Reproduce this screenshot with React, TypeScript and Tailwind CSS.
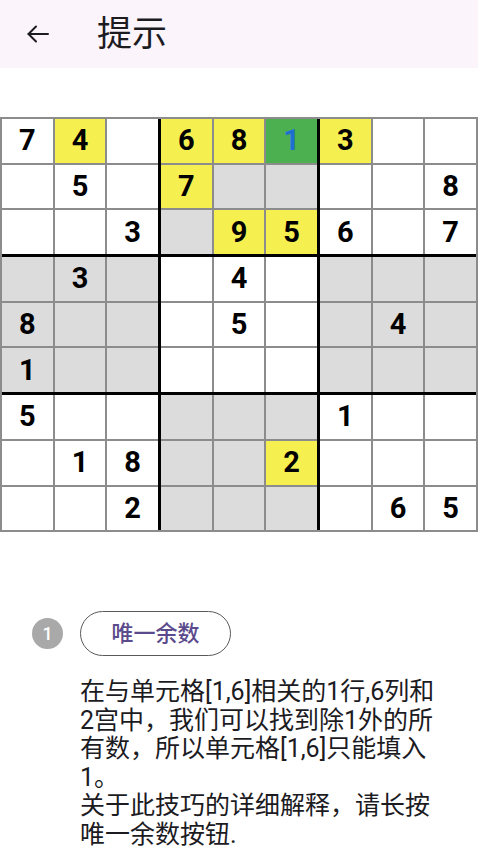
import React from "react";

const VALUES = [
  "74_6813__",
  "_5_7____8",
  "__3_956_7",
  "_3__4____",
  "8___5__4_",
  "1________",
  "5_____1__",
  "_18__2___",
  "__2____65",
];

const COLORS = [
  "wywyyGyww",
  "wwwyggwww",
  "wwwgyywww",
  "gggwwwggg",
  "gggwwwggg",
  "gggwwwggg",
  "wwwgggwww",
  "wwwggywww",
  "wwwgggwww",
];

const BG: Record<string, string> = {
  w: "bg-white",
  y: "bg-[#f6ef50]",
  g: "bg-[#dcdcdc]",
  G: "bg-[#4caf50]",
};

function Cell({ r, c }: { r: number; c: number }) {
  const v = VALUES[r][c];
  const col = COLORS[r][c];
  return (
    <div
      className={`${BG[col]} h-[43.7px] flex items-center justify-center text-[29px] font-bold leading-none ${
        col === "G" ? "text-[#1e6fd0]" : "text-black"
      }`}
      style={{ fontFamily: 'Roboto, "Noto Sans", sans-serif' }}
    >
      {v === "_" ? "" : v}
    </div>
  );
}

function Box({ bi, bj }: { bi: number; bj: number }) {
  const cells = [];
  for (let i = 0; i < 3; i++) {
    for (let j = 0; j < 3; j++) {
      cells.push(<Cell key={`${i}-${j}`} r={bi * 3 + i} c={bj * 3 + j} />);
    }
  }
  return <div className="grid grid-cols-3 gap-[2px] bg-[#8c8c8c]">{cells}</div>;
}

export default function App() {
  const boxes = [];
  for (let bi = 0; bi < 3; bi++) {
    for (let bj = 0; bj < 3; bj++) {
      boxes.push(<Box key={`${bi}-${bj}`} bi={bi} bj={bj} />);
    }
  }
  return (
    <div
      className="w-[478px] h-[850px] bg-white overflow-hidden text-[#1c1b1f]"
      style={{ fontFamily: 'Roboto, "Noto Sans CJK SC", sans-serif' }}
    >
      <header className="h-[68px] bg-[#fcf4fb] flex items-center">
        <div className="w-[97px] flex items-center pl-[25px]">
          <svg
            width="26"
            height="26"
            viewBox="0 0 26 26"
            fill="none"
            stroke="#1c1b1f"
            strokeWidth="2"
            strokeLinecap="round"
            strokeLinejoin="round"
          >
            <path d="M23 13H3.5" />
            <path d="M11 5.5 3.5 13l7.5 7.5" />
          </svg>
        </div>
        <h1 className="text-[35px] leading-none font-normal mt-[1px]">提示</h1>
      </header>

      <div className="mt-[49px] bg-[#8c8c8c] p-[2px]">
        <div className="grid grid-cols-3 gap-[3px] bg-black">{boxes}</div>
      </div>

      <div className="mt-[79px] flex items-center pl-[32px] gap-[17px]">
        <div className="w-[31px] h-[31px] rounded-full bg-[#a9a9a9] text-white text-[18px] font-medium flex items-center justify-center leading-none">
          1
        </div>
        <button className="w-[151px] h-[45px] rounded-full border-[1.5px] border-[#5a5a5a] text-[#5b4b8c] text-[22px] font-medium leading-none flex items-center justify-center bg-white">
          唯一余数
        </button>
      </div>

      <p className="mt-[22px] ml-[80px] w-[362px] text-[25px] leading-[28.5px]">
        在与单元格[1,6]相关的1行,6列和2宫中，我们可以找到除1外的所有数，所以单元格[1,6]只能填入1。
        <br />
        关于此技巧的详细解释，请长按唯一余数按钮.
      </p>
    </div>
  );
}
